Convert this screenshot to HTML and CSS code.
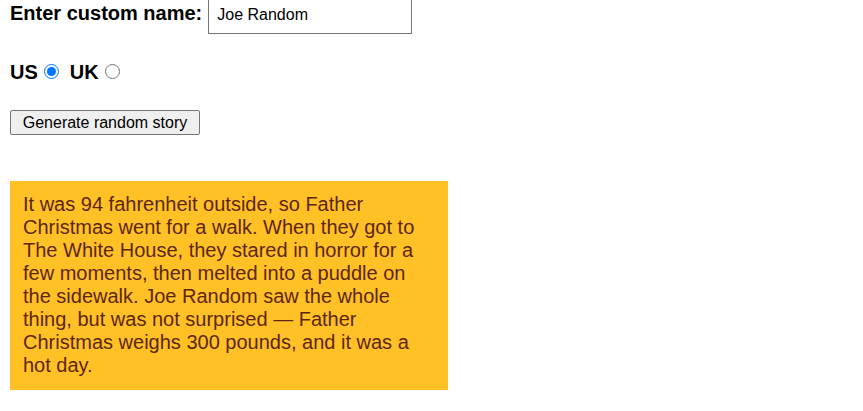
FILE: index.html
```html
<!DOCTYPE html>
<html>
<head>
<meta charset="utf-8">
<title>Silly story generator</title>
<link rel="stylesheet" href="styles.css">
</head>
<body>
  <div class="row name-row">
    <label for="customname">Enter custom name:</label>
    <input id="customname" type="text" value="Joe Random">
  </div>
  <div class="row radio-row">
    <label for="us">US</label>
    <input id="us" type="radio" name="ukus" value="us" checked>
    <label for="uk" class="uk">UK</label>
    <input id="uk" type="radio" name="ukus" value="uk">
  </div>
  <div class="row button-row">
    <button class="randomize">Generate random story</button>
  </div>
  <p class="story">It was 94 fahrenheit outside, so Father Christmas went for a walk. When they got to The White House, they stared in horror for a few moments, then melted into a puddle on the sidewalk. Joe Random saw the whole thing, but was not surprised — Father Christmas weighs 300 pounds, and it was a hot day.</p>
</body>
</html>
```
FILE: styles.css
```css
html, body {
  margin: 0;
  padding: 0;
  background: #ffffff;
}

body {
  font-family: "Liberation Sans", Arial, Helvetica, sans-serif;
  font-size: 20px;
  line-height: 23px;
  color: #000000;
  padding-left: 10px;
  width: 438px;
}

label {
  font-weight: bold;
}

.row {
  display: flex;
  align-items: center;
}

.name-row {
  margin-top: -4px;
  height: 38px;
  align-items: baseline;
}

.name-row label {
  margin-right: 6px;
}

input[type="text"] {
  box-sizing: border-box;
  width: 204px;
  height: 38px;
  padding: 0 8px;
  margin: 0;
  font-family: "Liberation Sans", Arial, sans-serif;
  font-size: 16px;
  color: #000000;
  border: 1px solid #767676;
  border-radius: 0;
  background: #ffffff;
  outline: none;
}

.radio-row {
  margin-top: 27px;
  height: 23px;
}

input[type="radio"] {
  width: 15px;
  height: 15px;
  margin: 0 0 0 6px;
  position: relative;
  top: -1px;
}

.radio-row .uk {
  margin-left: 11px;
}

.button-row {
  margin-top: 26px;
}

.randomize {
  box-sizing: border-box;
  height: 25px;
  width: 190px;
  padding: 0;
  margin: 0;
  font-family: "Liberation Sans", Arial, sans-serif;
  font-size: 16px;
  color: #000000;
  background: #efefef;
  border: 1px solid #767676;
  border-radius: 2px;
}

.story {
  margin: 46px 0 0 0;
  padding: 12px 12px 13px 13px;
  background: #ffc125;
  color: #5e2612;
}
```
